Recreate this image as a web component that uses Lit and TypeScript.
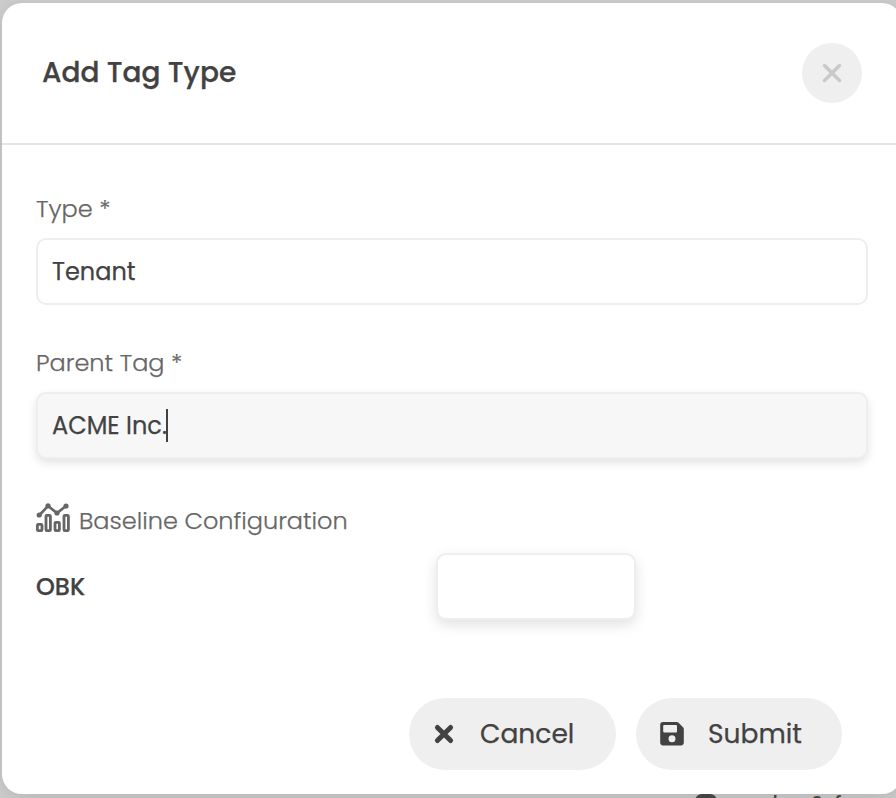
import { LitElement, html, css } from "lit";
import { customElement } from "lit/decorators.js";

@customElement("app-root")
export class AppRoot extends LitElement {
  static styles = css`
    :host {
      display: block;
      position: relative;
      box-sizing: border-box;
      width: 896px;
      height: 798px;
      padding: 3px 0 0 2px;
      overflow: hidden;
      background: #cfcfcf;
      color: #424242;
      font-family: Poppins, Inter, "Open Sans", sans-serif;
      -webkit-text-stroke: 0.25px currentColor;
    }
    * {
      box-sizing: border-box;
    }
    .behind {
      position: absolute;
      left: 695px;
      top: 794px;
      display: flex;
      height: 24px;
      color: #4a4a4a;
      font-size: 22px;
      line-height: 20px;
    }
    .blob {
      width: 22px;
      height: 22px;
      border-radius: 7px;
      background: #4a4a4c;
    }
    .word {
      margin-left: 46px;
    }
    .amp {
      margin-left: 32px;
    }
    .eff {
      margin-left: 8px;
    }
    .modal {
      position: relative;
      width: 900px;
      height: 791px;
      border-radius: 20px;
      background: #fff;
      box-shadow: 0 4px 24px rgba(0, 0, 0, 0.14);
    }
    header {
      display: flex;
      align-items: center;
      justify-content: space-between;
      height: 142px;
      padding: 0 40px;
      border-bottom: 2px solid #e4e4e4;
    }
    h1 {
      margin: 0;
      font-size: 28px;
      line-height: 40px;
      font-weight: 500;
    }
    .close {
      display: flex;
      align-items: center;
      justify-content: center;
      width: 60px;
      height: 60px;
      padding: 0;
      border: 0;
      border-radius: 50%;
      background: #efefef;
    }
    main {
      padding: 46px 34px 0;
    }
    .label {
      display: block;
      height: 36px;
      margin-bottom: 11px;
      line-height: 36px;
      font-size: 24px;
      font-weight: 300;
      color: #666;
    }
    .field {
      display: flex;
      align-items: center;
      height: 67px;
      padding: 0 14px;
      border: 2px solid #eee;
      border-radius: 10px;
      background: #fff;
      font-size: 24px;
    }
    .first {
      margin-bottom: 40px;
    }
    .active {
      background: #f7f7f7;
      box-shadow: 0 4px 10px rgba(0, 0, 0, 0.11);
    }
    .caret {
      width: 2px;
      height: 33px;
      margin-left: -1px;
      background: #424242;
    }
    .section {
      display: flex;
      align-items: center;
      height: 36px;
      margin-top: 43px;
      font-size: 24px;
      font-weight: 300;
      color: #666;
    }
    .section svg {
      margin: -4px 9px 0 0;
    }
    .row {
      display: grid;
      grid-template-columns: 400px 200px;
      align-items: center;
      margin-top: 15px;
      font-size: 24px;
      font-weight: 500;
    }
    .small {
      box-shadow: 0 5px 14px rgba(0, 0, 0, 0.12);
    }
    footer {
      display: flex;
      justify-content: flex-end;
      gap: 20px;
      margin-top: 78px;
      padding-right: 26px;
    }
    .btn {
      display: flex;
      align-items: center;
      width: 206px;
      height: 72px;
      padding: 0;
      border: 0;
      border-radius: 36px;
      background: #efefef;
      color: #424242;
      font: inherit;
      font-size: 26.5px;
    }
    .cancel {
      width: 207px;
      padding-left: 24px;
    }
    .cancel svg {
      margin-right: 25px;
    }
    .submit {
      padding-left: 23px;
    }
    .submit svg {
      margin-right: 23px;
    }
  `;

  render() {
    return html`
      <div class="behind">
        <span class="blob"></span><span class="word">d</span
        ><span class="amp">&amp;</span><span class="eff">f</span>
      </div>
      <section class="modal">
        <header>
          <h1>Add Tag Type</h1>
          <button class="close" aria-label="Close">
            <svg width="20" height="20" viewBox="0 0 20 20" fill="none" stroke="#c9c9c9" stroke-width="3.4" stroke-linecap="round">
              <path d="M2.5 2.5 17.5 17.5M17.5 2.5 2.5 17.5" />
            </svg>
          </button>
        </header>
        <main>
          <span class="label">Type *</span>
          <div class="field first"><span>Tenant</span></div>
          <span class="label">Parent Tag *</span>
          <div class="field active"><span>ACME Inc.</span><i class="caret"></i></div>
          <div class="section">
            <svg width="34" height="30" viewBox="0 0 34 30" fill="none" stroke="#666">
              <g stroke-width="2.8">
                <rect x="1.4" y="21.4" width="4.6" height="6.2" rx="0.8" />
                <rect x="10" y="12.4" width="4.4" height="15.2" rx="0.8" />
                <rect x="19" y="19.4" width="4.4" height="8.2" rx="0.8" />
                <rect x="28" y="12.4" width="4.4" height="15.2" rx="0.8" />
              </g>
              <path d="M3.5 12 12 3 21 10 30 3" stroke-width="2.6" />
              <g fill="#666" stroke="none">
                <circle cx="3.2" cy="12" r="2.6" />
                <circle cx="12" cy="2.8" r="2.6" />
                <circle cx="21" cy="10" r="2.6" />
                <circle cx="30" cy="3" r="2.6" />
              </g>
            </svg>
            <span>Baseline Configuration</span>
          </div>
          <div class="row"><span>OBK</span><div class="field small"></div></div>
          <footer>
            <button class="btn cancel">
              <svg width="22" height="22" viewBox="0 0 22 22" fill="none" stroke="#424242" stroke-width="5" stroke-linecap="round">
                <path d="M4.4 4.4 17.6 17.6M17.6 4.4 4.4 17.6" />
              </svg>
              Cancel
            </button>
            <button class="btn submit">
              <svg width="26" height="26" viewBox="0 0 26 26">
                <path fill="#424242" fill-rule="evenodd" d="M4 1H17.8Q18.8 1 19.6 1.8L24 6.2Q24.8 7 24.8 8V21.6Q24.8 24.4 22 24.4H4Q1.2 24.4 1.2 21.6V3.8Q1.2 1 4 1ZM4.2 5V10.5Q4.2 11.5 5.2 11.5H17Q18 11.5 18 10.5V5Q18 4 17 4H5.2Q4.2 4 4.2 5ZM13 14.3A3.5 3.5 0 1 0 13 21.3 3.5 3.5 0 1 0 13 14.3Z" />
              </svg>
              Submit
            </button>
          </footer>
        </main>
      </section>
    `;
  }
}
